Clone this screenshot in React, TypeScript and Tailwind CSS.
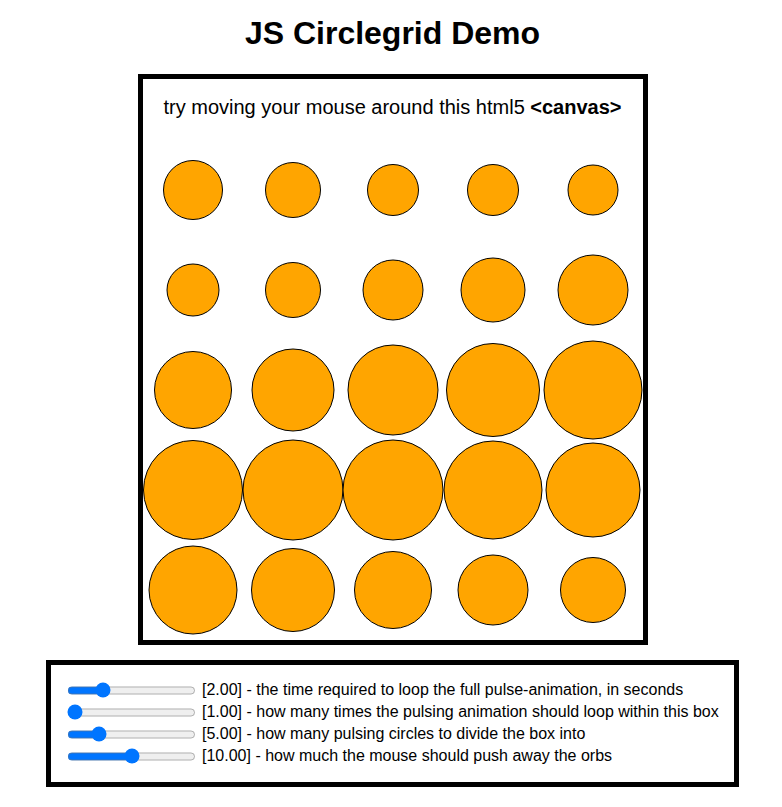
import { useState } from 'react';

// radius of every orb, row by row, as the pulse left them in the frame
const RADII = [
  [29.5, 27.5, 25.5, 25.5, 25],
  [26, 27.5, 30, 32, 35],
  [38.5, 41, 45, 46.5, 49],
  [49.5, 50, 50, 49, 47],
  [44, 41.5, 38.5, 35, 32.5],
];

type Control = {
  min: number;
  max: number;
  value: number;
  label: string;
};

const CONTROLS: Control[] = [
  { min: 1, max: 5, value: 2, label: 'the time required to loop the full pulse-animation, in seconds' },
  { min: 1, max: 10, value: 1, label: 'how many times the pulsing animation should loop within this box' },
  { min: 1, max: 20, value: 5, label: 'how many pulsing circles to divide the box into' },
  { min: 0, max: 20, value: 10, label: 'how much the mouse should push away the orbs' },
];

function CircleGrid() {
  return (
    <svg width={500} height={500} viewBox="0 0 500 500" className="block">
      {RADII.map((row, j) =>
        row.map((r, i) => (
          <circle
            key={`${i}-${j}`}
            cx={50 + i * 100}
            cy={50 + j * 100}
            r={r}
            fill="#ffa500"
            stroke="#000"
            strokeWidth={1}
          />
        ))
      )}
    </svg>
  );
}

export default function App() {
  const [values, setValues] = useState(CONTROLS.map((c) => c.value));

  return (
    <div className="min-h-screen bg-white pl-[3px] text-black font-['Liberation_Sans',Arial,sans-serif]">
      <h1 className="pt-[15px] text-center text-[32px] leading-[37px] font-bold">JS Circlegrid Demo</h1>

      {/* Canvas */}
      <div className="mx-auto mt-[22px] w-[510px] border-[5px] border-black">
        <div className="h-[61px] pt-[17px] text-center text-[20px] leading-[23px]">
          try moving your mouse around this html5 <b>&lt;canvas&gt;</b>
        </div>
        <CircleGrid />
      </div>

      {/* Controls */}
      <div className="mx-auto mt-[15px] w-[693px] border-[5px] border-black pt-[14px] pb-[15px] pl-4">
        {CONTROLS.map((c, idx) => (
          <div key={idx} className="flex h-[22px] items-center text-[16px] leading-[18px]">
            <input
              type="range"
              min={c.min}
              max={c.max}
              step={0.01}
              value={values[idx]}
              onChange={(e) => {
                const next = [...values];
                next[idx] = parseFloat(e.target.value);
                setValues(next);
              }}
              className="m-0 h-[21px] w-[129px] shrink-0 accent-[#0075ff]"
            />
            <span className="ml-[6px] whitespace-nowrap">
              [{values[idx].toFixed(2)}] - {c.label}
            </span>
          </div>
        ))}
      </div>
    </div>
  );
}
